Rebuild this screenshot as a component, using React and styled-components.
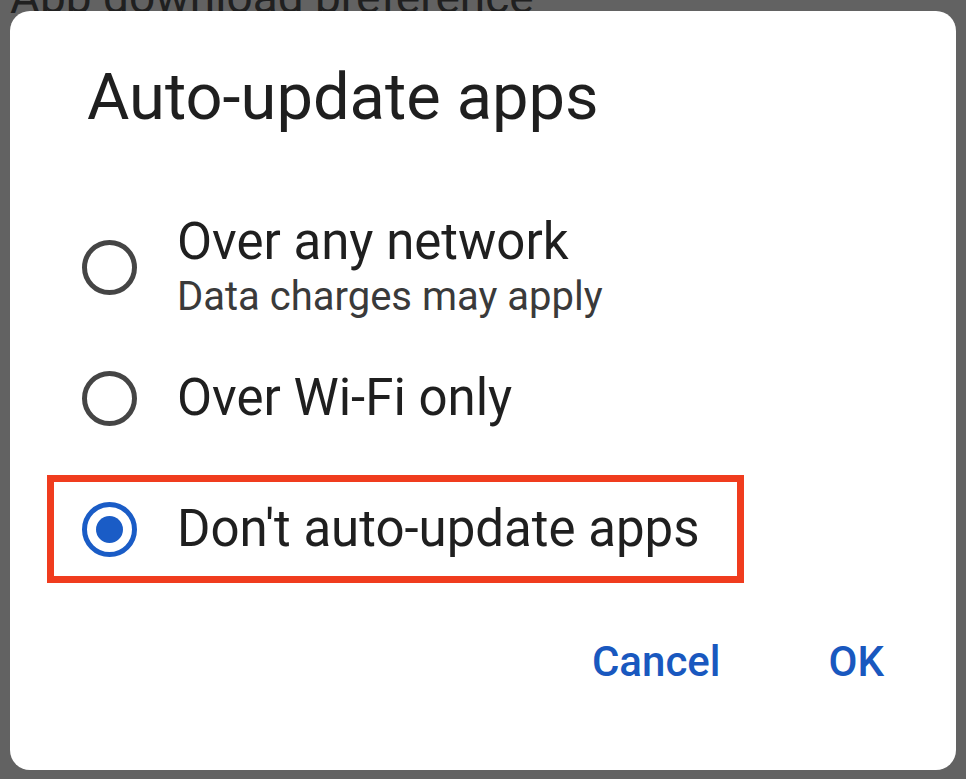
import React from 'react'
import styled, { createGlobalStyle } from 'styled-components'

const GlobalStyle = createGlobalStyle`
  html, body {
    margin: 0;
    padding: 0;
    background: #626262;
    overflow: hidden;
  }
  body {
    font-family: Roboto, 'Noto Sans', Arial, sans-serif;
  }
`

const Page = styled.div`
  width: 966px;
  height: 779px;
  background: #626262;
  overflow: hidden;
`

const BackdropTitle = styled.div`
  margin-top: -33px;
  padding-left: 10px;
  font-size: 46px;
  line-height: 60px;
  color: #202020;
  white-space: nowrap;
`

const Dialog = styled.div`
  position: relative;
  box-sizing: border-box;
  margin: -16px 0 0 10px;
  width: 946px;
  height: 759px;
  padding: 50px 72px 0 37px;
  background: #ffffff;
  border-radius: 20px;
  display: flex;
  flex-direction: column;
`

const Title = styled.h1`
  margin: 0 0 80px 40px;
  font-size: 65px;
  line-height: 72px;
  font-weight: 400;
  color: #1f1f1f;
`

const Options = styled.div`
  display: flex;
  flex-direction: column;
  align-items: flex-start;
`

const Row = styled.div`
  box-sizing: border-box;
  height: 108px;
  display: flex;
  align-items: center;
  gap: 40px;
  padding: 0 37px 0 28px;
  margin-bottom: 23px;
  border: 7px solid ${p => (p.$highlight ? '#f03c1e' : 'transparent')};
  &:last-child {
    margin-bottom: 0;
  }
`

const Radio = styled.span`
  position: relative;
  flex: none;
  box-sizing: border-box;
  width: 55px;
  height: 55px;
  border-radius: 50%;
  border: 5px solid ${p => (p.$checked ? '#1a5cc6' : '#454545')};
  &::after {
    content: '';
    display: ${p => (p.$checked ? 'block' : 'none')};
    position: absolute;
    left: 50%;
    top: 50%;
    width: 27px;
    height: 27px;
    margin: -13.5px 0 0 -13.5px;
    border-radius: 50%;
    background: #1a5cc6;
  }
`

const Label = styled.div`
  display: flex;
  flex-direction: column;
`

const LabelMain = styled.span`
  font-size: 51px;
  line-height: 60px;
  color: #1f1f1f;
  white-space: nowrap;
`

const LabelSub = styled.span`
  font-size: 40px;
  line-height: 50px;
  color: #3a3a3a;
  white-space: nowrap;
`

const Actions = styled.div`
  display: flex;
  justify-content: flex-end;
  gap: 108px;
  margin-top: 55px;
`

const ActionButton = styled.button`
  border: none;
  background: none;
  padding: 0;
  font-family: Roboto, 'Noto Sans', Arial, sans-serif;
  font-size: 42px;
  line-height: 48px;
  font-weight: 500;
  color: #1958bf;
`

const options = [
  { label: 'Over any network', sub: 'Data charges may apply' },
  { label: 'Over Wi-Fi only' },
  { label: "Don't auto-update apps", checked: true, highlight: true },
]

const App = () => (
  <Page>
    <GlobalStyle />
    <BackdropTitle>App download preference</BackdropTitle>
    <Dialog>
      <Title>Auto-update apps</Title>
      <Options>
        {options.map(o => (
          <Row key={o.label} $highlight={o.highlight}>
            <Radio $checked={o.checked} />
            <Label>
              <LabelMain>{o.label}</LabelMain>
              {o.sub && <LabelSub>{o.sub}</LabelSub>}
            </Label>
          </Row>
        ))}
      </Options>
      <Actions>
        <ActionButton>Cancel</ActionButton>
        <ActionButton>OK</ActionButton>
      </Actions>
    </Dialog>
  </Page>
)

export default App
